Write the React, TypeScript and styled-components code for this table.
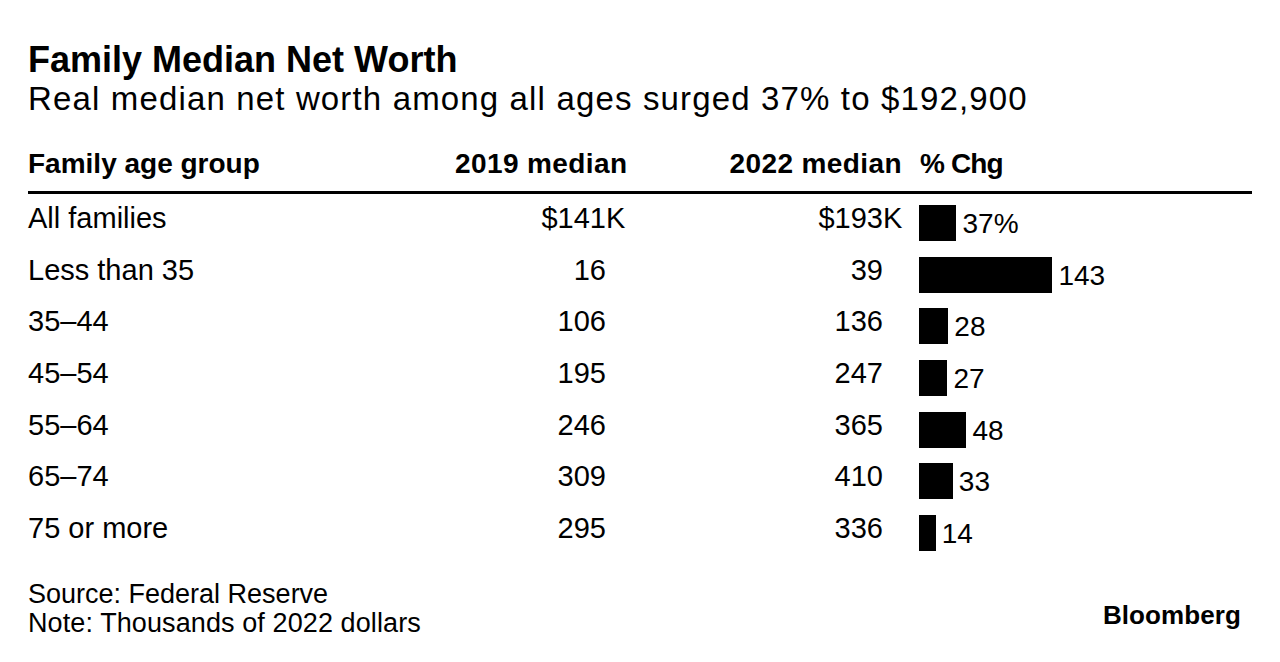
import React, { ReactElement } from "react"
import styled, { createGlobalStyle } from "styled-components"

interface AgeRow {
  group: string
  median2019: string
  median2022: string
  change: number
  unit?: boolean
}

const rows: AgeRow[] = [
  { group: "All families", median2019: "$141", median2022: "$193", change: 37, unit: true },
  { group: "Less than 35", median2019: "16", median2022: "39", change: 143 },
  { group: "35–44", median2019: "106", median2022: "136", change: 28 },
  { group: "45–54", median2019: "195", median2022: "247", change: 27 },
  { group: "55–64", median2019: "246", median2022: "365", change: 48 },
  { group: "65–74", median2019: "309", median2022: "410", change: 33 },
  { group: "75 or more", median2019: "295", median2022: "336", change: 14 },
]

// bar scale taken from the chart: ~0.9px per percent point plus a small floor
const barWidth = (pct: number): number => 4 + pct * 0.905

const GlobalStyle = createGlobalStyle`
  html, body {
    margin: 0;
    padding: 0;
    background: #fff;
  }
  body {
    font-family: "Liberation Sans", Arial, sans-serif;
    color: #000;
  }
`

const Page = styled.div`
  width: 1280px;
  height: 662px;
  box-sizing: border-box;
  padding: 40px 28px 0;
  overflow: hidden;
`

const Title = styled.h1`
  margin: 0;
  font-size: 36px;
  line-height: 40px;
  font-weight: 700;
`

const Subtitle = styled.p`
  margin: 0;
  font-size: 33px;
  line-height: 38px;
  letter-spacing: 1.15px;
`

const columns = "427px 172px 275px 1fr"

const HeaderRow = styled.div`
  display: grid;
  grid-template-columns: ${columns};
  padding: 32px 0 13px;
  border-bottom: 3px solid #000;
  font-size: 28px;
  line-height: 28px;
  font-weight: 700;
`

const HeadCell = styled.div<{ $align?: "left" | "right" }>`
  text-align: ${(p) => p.$align ?? "left"};
  white-space: nowrap;
`

const NumHead = styled(HeadCell)`
  letter-spacing: 0.4px;
`

const PctHead = styled(HeadCell)`
  padding-left: 18px;
  letter-spacing: -0.9px;
`

const Body = styled.div`
  display: grid;
  grid-template-columns: ${columns};
  grid-auto-rows: 51.7px;
  align-items: start;
  font-size: 29px;
  line-height: 28px;
`

const Cell = styled.div`
  padding-top: 10px;
  white-space: nowrap;
`

const ValueCell = styled(Cell)<{ $pad: number }>`
  text-align: right;
  padding-right: ${(p) => p.$pad}px;
`

const Unit = styled.span`
  margin-right: -0.667em;
`

const BarCell = styled.div`
  display: flex;
  align-items: center;
  gap: 6px;
  padding: 11px 0 0 17px;
`

const Bar = styled.div`
  height: 36px;
  background: #000;
  flex: none;
`

const BarLabel = styled.span`
  font-size: 28px;
  line-height: 28px;
  padding-top: 2px;
`

const Footer = styled.div`
  display: flex;
  justify-content: space-between;
  align-items: flex-end;
  margin-top: 24px;
`

const Notes = styled.div`
  font-size: 27px;
  line-height: 29px;
`

const NoteLine = styled.div`
  letter-spacing: 0.1px;
`

const Logo = styled.div`
  font-size: 26px;
  line-height: 26px;
  font-weight: 700;
  margin: 0 11px 10px 0;
  letter-spacing: 0.1px;
`

export default function App(): ReactElement {
  return (
    <>
      <GlobalStyle />
      <Page>
        <Title>Family Median Net Worth</Title>
        <Subtitle>
          Real median net worth among all ages surged 37% to $192,900
        </Subtitle>

        <HeaderRow>
          <HeadCell>Family age group</HeadCell>
          <NumHead $align="right">2019 median</NumHead>
          <NumHead $align="right">2022 median</NumHead>
          <PctHead>% Chg</PctHead>
        </HeaderRow>

        <Body>
          {rows.map((row) => (
            <React.Fragment key={row.group}>
              <Cell>{row.group}</Cell>
              <ValueCell $pad={21}>
                {row.median2019}
                {row.unit && <Unit>K</Unit>}
              </ValueCell>
              <ValueCell $pad={19}>
                {row.median2022}
                {row.unit && <Unit>K</Unit>}
              </ValueCell>
              <BarCell>
                <Bar style={{ width: barWidth(row.change) }} />
                <BarLabel>
                  {row.change}
                  {row.unit ? "%" : ""}
                </BarLabel>
              </BarCell>
            </React.Fragment>
          ))}
        </Body>

        <Footer>
          <Notes>
            <div>Source: Federal Reserve</div>
            <NoteLine>Note: Thousands of 2022 dollars</NoteLine>
          </Notes>
          <Logo>Bloomberg</Logo>
        </Footer>
      </Page>
    </>
  )
}
